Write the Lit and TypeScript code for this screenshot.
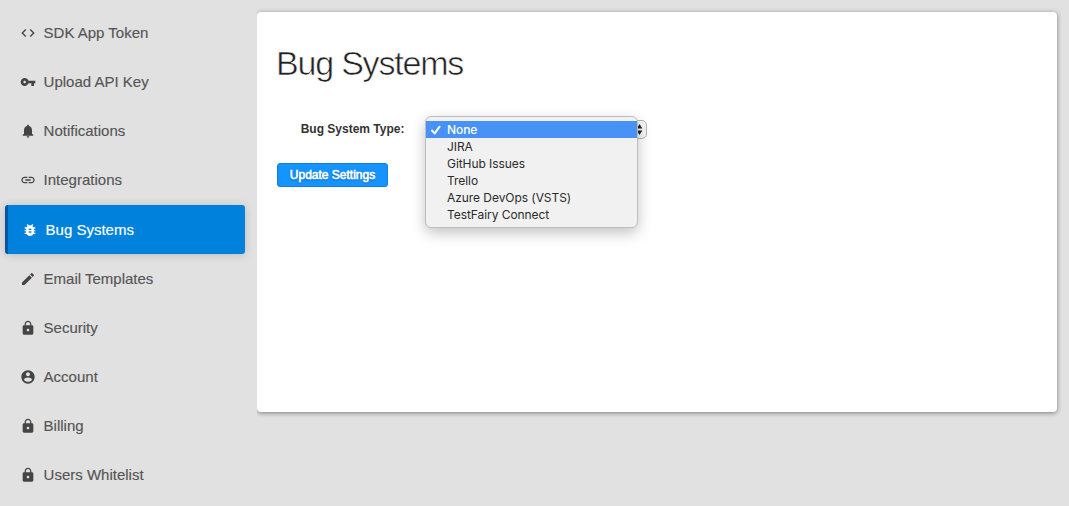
import { LitElement, html, css, svg } from "lit";
import { customElement, state } from "lit/decorators.js";
import { classMap } from "lit/directives/class-map.js";

const lock = "M18 8h-1V6c0-2.76-2.24-5-5-5S7 3.24 7 6v2H6c-1.1 0-2 .9-2 2v10c0 1.1.9 2 2 2h12c1.1 0 2-.9 2-2V10c0-1.1-.9-2-2-2zm-6 9c-1.1 0-2-.9-2-2s.9-2 2-2 2 .9 2 2-.9 2-2 2zm3.1-9H8.900V6c0-1.710 1.390-3.100 3.100-3.100 1.710 0 3.100 1.390 3.100 3.100v2z";

const items = [
  { label: "SDK App Token", path: "M9.400 16.600L4.800 12l4.600-4.600L8 6l-6 6 6 6 1.400-1.400zm5.200 0l4.600-4.600-4.600-4.600L16 6l6 6-6 6-1.400-1.400z" },
  { label: "Upload API Key", path: "M12.650 10C11.830 7.670 9.610 6 7 6c-3.310 0-6 2.690-6 6s2.690 6 6 6c2.610 0 4.830-1.670 5.650-4H17v4h4v-4h2v-4H12.650zM7 14c-1.100 0-2-.9-2-2s.9-2 2-2 2 .9 2 2-.9 2-2 2z" },
  { label: "Notifications", path: "M12 22c1.100 0 2-.9 2-2h-4c0 1.100.89 2 2 2zm6-6v-5c0-3.070-1.640-5.640-4.500-6.320V4c0-.83-.67-1.500-1.500-1.500s-1.500.67-1.500 1.500v.68C7.630 5.360 6 7.920 6 11v5l-2 2v1h16v-1l-2-2z" },
  { label: "Integrations", path: "M3.900 12c0-1.710 1.390-3.100 3.100-3.100h4V7H7c-2.760 0-5 2.240-5 5s2.240 5 5 5h4v-1.900H7c-1.710 0-3.100-1.390-3.100-3.100zM8 13h8v-2H8v2zm9-6h-4v1.900h4c1.710 0 3.100 1.390 3.100 3.100s-1.390 3.100-3.100 3.100h-4V17h4c2.760 0 5-2.240 5-5s-2.240-5-5-5z" },
  { label: "Bug Systems", path: "M20 8h-2.810c-.45-.78-1.070-1.450-1.820-1.960L17 4.410 15.590 3l-2.170 2.170C12.960 5.060 12.490 5 12 5c-.49 0-.96.06-1.410.17L8.410 3 7 4.410l1.620 1.630C7.880 6.550 7.260 7.220 6.810 8H4v2h2.090c-.05.33-.09.66-.09 1v1H4v2h2v1c0 .34.04.67.09 1H4v2h2.810c1.040 1.790 2.970 3 5.190 3s4.150-1.210 5.190-3H20v-2h-2.090c.05-.33.09-.66.09-1v-1h2v-2h-2v-1c0-.34-.04-.67-.09-1H20V8zm-6 8h-4v-2h4v2zm0-4h-4v-2h4v2z" },
  { label: "Email Templates", path: "M3 17.250V21h3.750L17.810 9.940l-3.750-3.750L3 17.250zM20.710 7.040c.39-.39.39-1.020 0-1.410l-2.340-2.340c-.39-.39-1.020-.39-1.410 0l-1.830 1.830 3.750 3.750 1.830-1.830z" },
  { label: "Security", path: lock },
  { label: "Account", path: "M12 2C6.480 2 2 6.480 2 12s4.480 10 10 10 10-4.480 10-10S17.520 2 12 2zm0 3c1.660 0 3 1.340 3 3s-1.340 3-3 3-3-1.340-3-3 1.340-3 3-3zm0 14.200c-2.500 0-4.710-1.280-6-3.220.03-1.990 4-3.080 6-3.080 1.990 0 5.970 1.090 6 3.080-1.290 1.940-3.500 3.220-6 3.220z" },
  { label: "Billing", path: lock },
  { label: "Users Whitelist", path: lock },
];

const systems = ["None", "JIRA", "GitHub Issues", "Trello", "Azure DevOps (VSTS)", "TestFairy Connect"];

@customElement("settings-nav")
class SettingsNav extends LitElement {
  @state() active = "Bug Systems";

  static styles = css`
    :host { display: block; box-sizing: border-box; width: 257px; padding: 9px 12px 0 5px; }
    .item {
      display: flex; align-items: center; box-sizing: border-box; height: 49px;
      padding: 0 0 2px 15px; gap: 7.600px; font-size: 15px; color: #555; cursor: pointer;
      white-space: nowrap; -webkit-text-stroke: .15px;
    }
    .icon { width: 16px; height: 16px; margin-top: 1px; fill: #444; flex: none; }
    .active {
      background: #0082dc; color: #fff; border-left: 3px solid #00569f; border-radius: 3px;
      padding: 0 0 0 14px; box-shadow: 0 1px 8px rgba(0, 0, 0, .17);
    }
    .active .icon { fill: #fff; }
    .active ~ .item { padding-bottom: 0; }
  `;

  render() {
    return html`${items.map((i) => html`
      <div class=${classMap({ item: true, active: i.label === this.active })} @click=${() => (this.active = i.label)}>
        <svg class="icon" viewBox="0 0 24 24">${svg`<path d=${i.path}></path>`}</svg>
        <span>${i.label}</span>
      </div>`)}`;
  }
}

@customElement("system-select")
class SystemSelect extends LitElement {
  @state() value = "None";

  static styles = css`
    :host { display: block; position: relative; width: 221px; height: 19px; }
    .control {
      box-sizing: border-box; height: 19px; border: 1px solid #b4b4b8; border-radius: 5px;
      background: #f6f6f6; display: flex; justify-content: flex-end; align-items: center; padding-right: 3.500px;
    }
    .arrows { width: 7px; height: 11px; fill: #222; }
    .menu {
      position: absolute; left: -1px; top: -4px; width: 213px; height: 112px; box-sizing: border-box;
      border: 1px solid #bdbdbd; border-radius: 6px; background: #f1f1f1; padding: 4px 0;
      box-shadow: 0 5px 14px rgba(0, 0, 0, .24);
      font: 12px/17px Inter, "Liberation Sans", sans-serif; letter-spacing: -.06px; color: #2b2b2b;
    }
    .option { display: flex; align-items: center; height: 17px; white-space: nowrap; }
    .mark { width: 21px; height: 17px; flex: none; fill: none; stroke: #fff; stroke-width: 2; stroke-linecap: round; stroke-linejoin: round; }
    .chosen { background: #4892f7; color: #fff; font-weight: 500; }
  `;

  render() {
    return html`
      <div class="control">
        <svg class="arrows" viewBox="0 0 7 11"><path d="M3.500 0L6.300 4.400H.7zM3.500 11L6.300 6.600H.7z"></path></svg>
      </div>
      <div class="menu">
        ${systems.map((s) => html`
          <div class=${classMap({ option: true, chosen: s === this.value })} @click=${() => (this.value = s)}>
            <svg class="mark" viewBox="0 0 21 17">${s === this.value ? svg`<path d="M6 9.500L8.700 12.400L13.600 5.700"></path>` : ""}</svg>
            <span>${s}</span>
          </div>`)}
      </div>`;
  }
}

@customElement("app-root")
class AppRoot extends LitElement {
  static styles = css`
    :host {
      display: flex; box-sizing: border-box; width: 100%; height: 100vh; overflow: hidden;
      background: #e1e1e1; font-family: "Liberation Sans", Arial, sans-serif;
    }
    .content { flex: 1; padding: 12px 12px 0 0; overflow: hidden; }
    .panel {
      box-sizing: border-box; height: 400px; background: #fff; border-radius: 4px; padding: 0 20px;
      box-shadow: 0 1px 5px rgba(0, 0, 0, .45);
    }
    .title {
      margin: 0 0 0 -1px; padding-top: 30px; font-size: 34px; line-height: 42px; font-weight: 400; color: #222;
      -webkit-text-stroke: .6px #fff; letter-spacing: -1.200px; white-space: nowrap;
    }
    .field { display: flex; align-items: center; padding-top: 36px; }
    .label {
      width: 127.500px; margin-right: 21.500px; padding-bottom: 2px; text-align: right; font-size: 12px; font-weight: 700;
      color: #333; white-space: nowrap;
    }
    .button {
      display: block; box-sizing: border-box; margin-top: 24px; width: 111px; height: 24px; padding: 0;
      border: 1px solid #1080dc; border-radius: 3px; background: #1593ff; color: #fff;
      font: 12px/22px "Liberation Sans", Arial, sans-serif; -webkit-text-stroke: .6px #fff;
      text-shadow: 0 1px 2px rgba(0, 0, 0, .4); white-space: nowrap;
    }
  `;

  render() {
    return html`
      <settings-nav></settings-nav>
      <main class="content">
        <section class="panel">
          <h1 class="title">Bug Systems</h1>
          <div class="field">
            <span class="label">Bug System Type:</span>
            <system-select></system-select>
          </div>
          <button class="button">Update Settings</button>
        </section>
      </main>`;
  }
}
